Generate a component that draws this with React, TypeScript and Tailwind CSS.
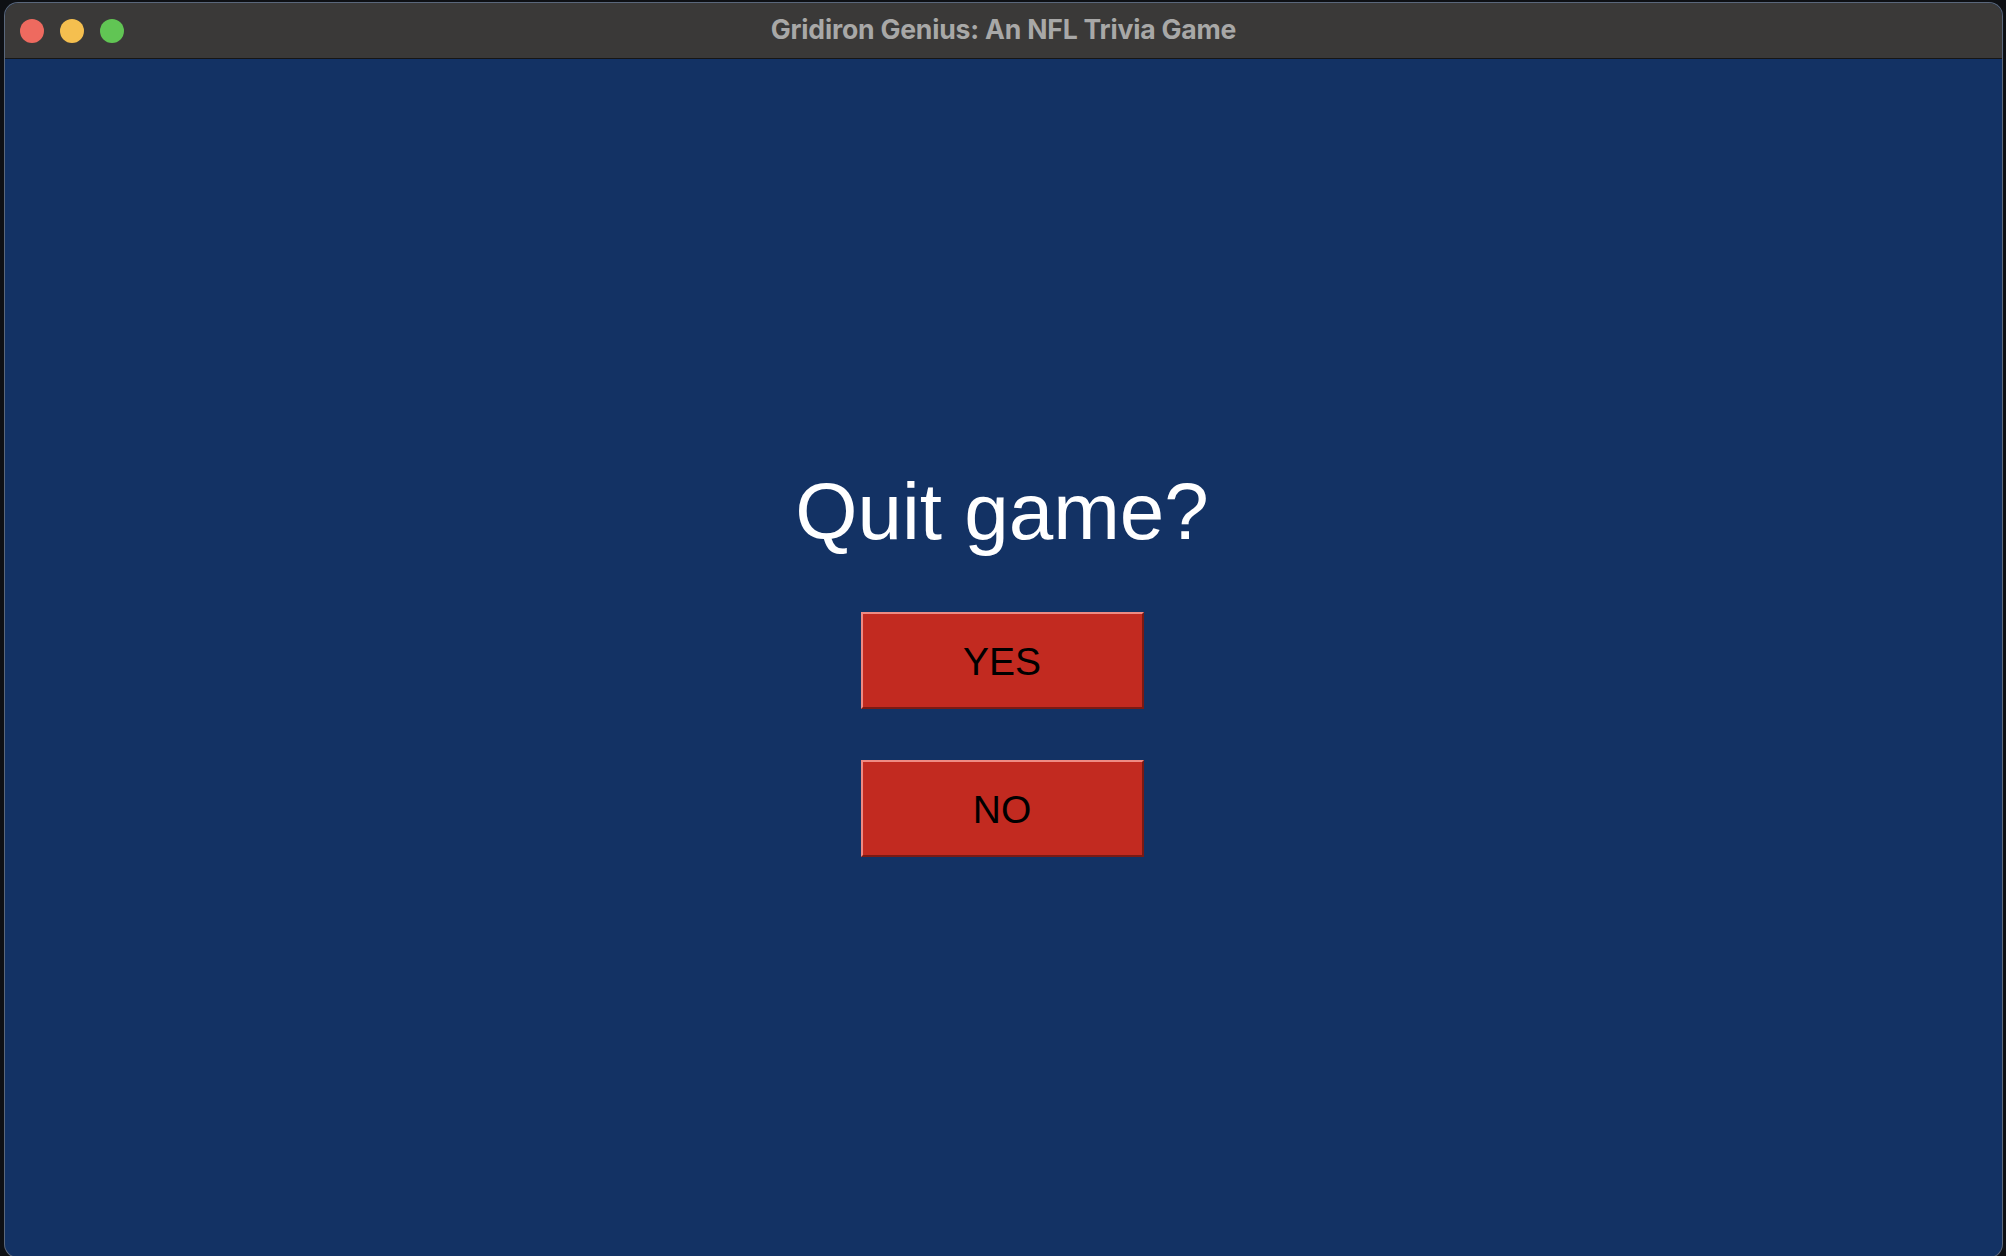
import * as React from "react"

export default function App() {
    return (
        <div className="w-[2006px] h-[1256px] bg-[#0e1014] pt-[2px] pl-[4px] overflow-hidden">
            <div className="w-[1999px] h-[1256px] rounded-[14px] border border-[#8a8a8a]/60 overflow-hidden flex flex-col bg-[#133264]">

                {/* --- TITLE BAR --- */}
                <div className="h-[56px] shrink-0 bg-[#3a3938] border-b border-[#161616] grid grid-cols-[1fr_auto_1fr] items-center">
                    <div className="flex items-center gap-4 pl-[15px]">
                        <span className="w-6 h-6 rounded-full bg-[#ee6a5f]"></span>
                        <span className="w-6 h-6 rounded-full bg-[#f5bf4f]"></span>
                        <span className="w-6 h-6 rounded-full bg-[#61c554]"></span>
                    </div>
                    <p className="text-[26.6px] font-bold text-[#a8a8a7] font-['Inter','Roboto',sans-serif] tracking-[-0.2px] pb-[2px]">
                        Gridiron Genius: An NFL Trivia Game
                    </p>
                    <div></div>
                </div>

                {/* --- CONTENT --- */}
                <div className="flex-1 flex flex-col items-center justify-center pt-[12px] pr-[3px] font-['Liberation_Sans',Arial,sans-serif]">
                    <h1 className="text-[80px] leading-none text-white">Quit game?</h1>
                    <div className="mt-[60px] flex flex-col gap-[51px]">
                        <QuitButton label="YES"/>
                        <QuitButton label="NO"/>
                    </div>
                </div>
            </div>
        </div>
    )
}

function QuitButton({label}: { label: string }) {
    return (
        <button
            className="w-[283px] h-[97px] bg-[#c22a20] border-2 border-t-[#ef8a82] border-l-[#ef8a82] border-r-[#7a1a14] border-b-[#7a1a14] text-black text-[39px] leading-none pt-[3px] flex items-center justify-center">
            {label}
        </button>
    )
}
